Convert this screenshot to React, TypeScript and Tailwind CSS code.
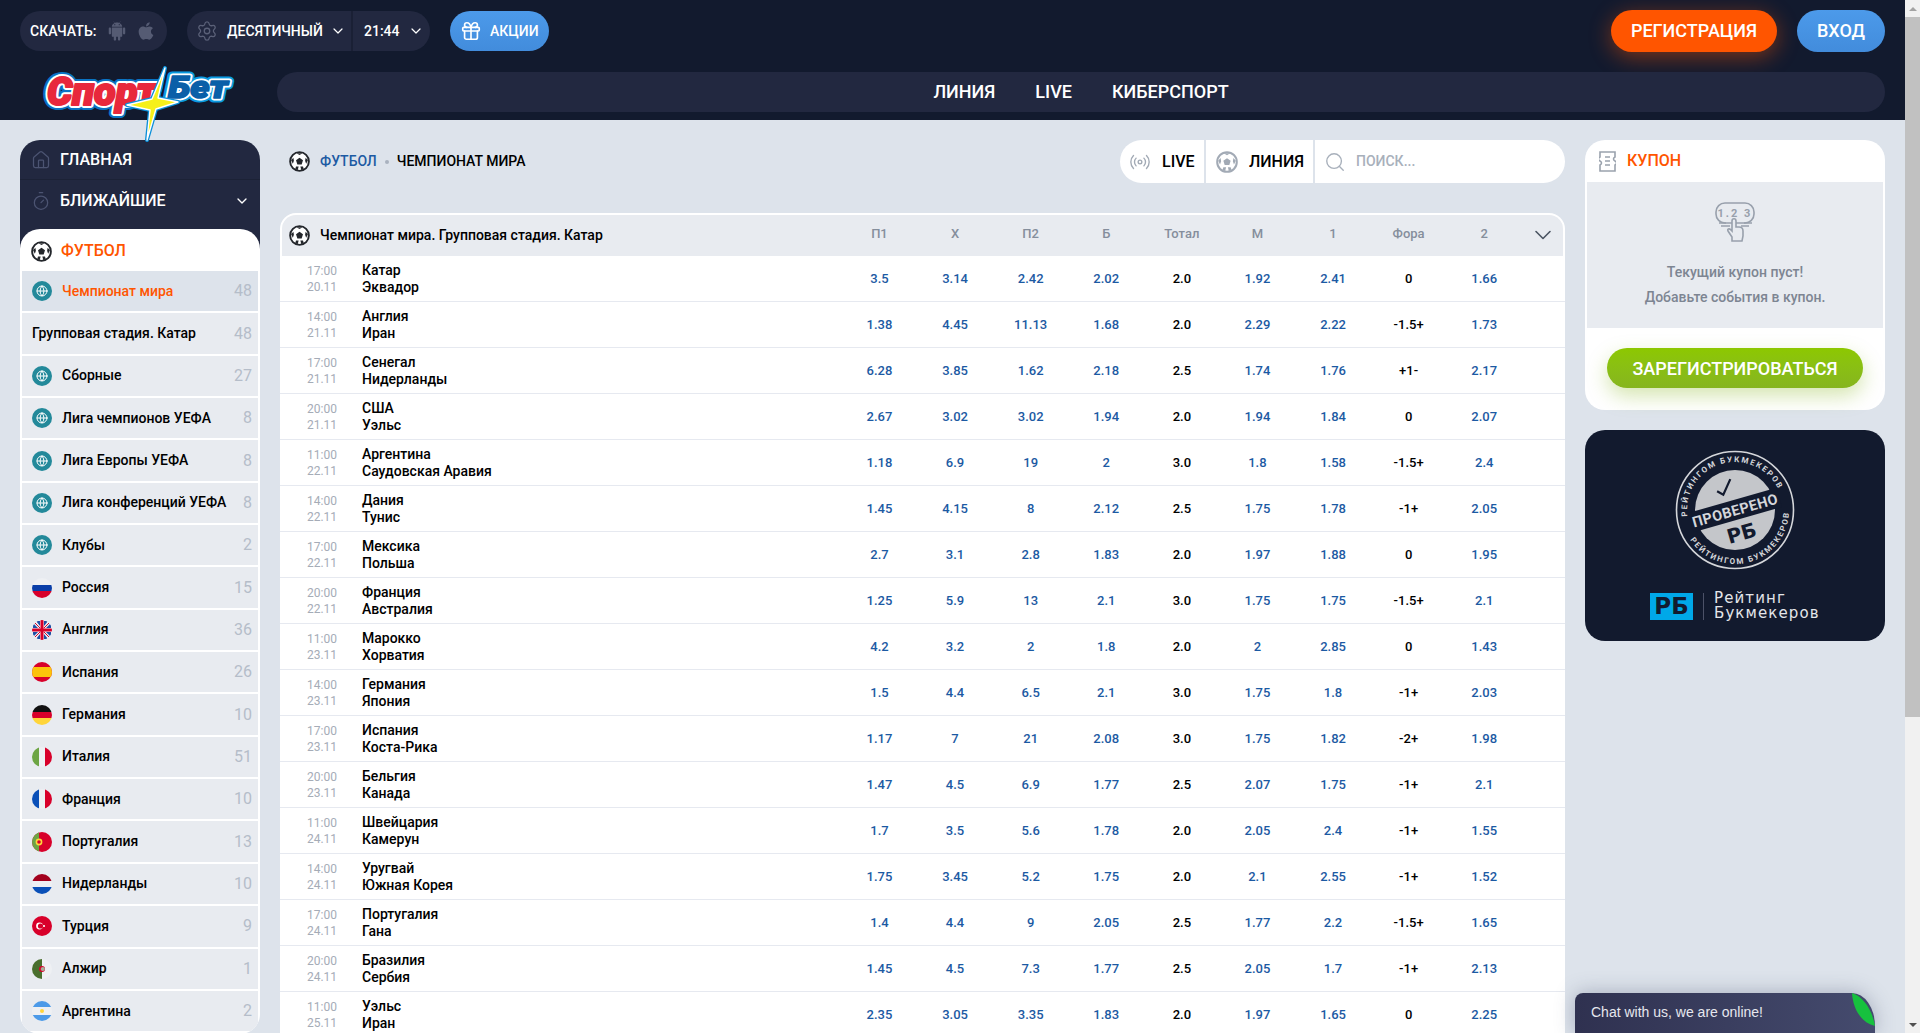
import { ChevronDown, Gift, Globe, House, Radio, Search, Settings, Timer } from "lucide-react"
import { AiFillAndroid } from "react-icons/ai"
import { FaApple } from "react-icons/fa"

const matches = [
    ["17:00", "20.11", "Катар", "Эквадор", "3.5", "3.14", "2.42", "2.02", "2.0", "1.92", "2.41", "0", "1.66"],
    ["14:00", "21.11", "Англия", "Иран", "1.38", "4.45", "11.13", "1.68", "2.0", "2.29", "2.22", "-1.5+", "1.73"],
    ["17:00", "21.11", "Сенегал", "Нидерланды", "6.28", "3.85", "1.62", "2.18", "2.5", "1.74", "1.76", "+1-", "2.17"],
    ["20:00", "21.11", "США", "Уэльс", "2.67", "3.02", "3.02", "1.94", "2.0", "1.94", "1.84", "0", "2.07"],
    ["11:00", "22.11", "Аргентина", "Саудовская Аравия", "1.18", "6.9", "19", "2", "3.0", "1.8", "1.58", "-1.5+", "2.4"],
    ["14:00", "22.11", "Дания", "Тунис", "1.45", "4.15", "8", "2.12", "2.5", "1.75", "1.78", "-1+", "2.05"],
    ["17:00", "22.11", "Мексика", "Польша", "2.7", "3.1", "2.8", "1.83", "2.0", "1.97", "1.88", "0", "1.95"],
    ["20:00", "22.11", "Франция", "Австралия", "1.25", "5.9", "13", "2.1", "3.0", "1.75", "1.75", "-1.5+", "2.1"],
    ["11:00", "23.11", "Марокко", "Хорватия", "4.2", "3.2", "2", "1.8", "2.0", "2", "2.85", "0", "1.43"],
    ["14:00", "23.11", "Германия", "Япония", "1.5", "4.4", "6.5", "2.1", "3.0", "1.75", "1.8", "-1+", "2.03"],
    ["17:00", "23.11", "Испания", "Коста-Рика", "1.17", "7", "21", "2.08", "3.0", "1.75", "1.82", "-2+", "1.98"],
    ["20:00", "23.11", "Бельгия", "Канада", "1.47", "4.5", "6.9", "1.77", "2.5", "2.07", "1.75", "-1+", "2.1"],
    ["11:00", "24.11", "Швейцария", "Камерун", "1.7", "3.5", "5.6", "1.78", "2.0", "2.05", "2.4", "-1+", "1.55"],
    ["14:00", "24.11", "Уругвай", "Южная Корея", "1.75", "3.45", "5.2", "1.75", "2.0", "2.1", "2.55", "-1+", "1.52"],
    ["17:00", "24.11", "Португалия", "Гана", "1.4", "4.4", "9", "2.05", "2.5", "1.77", "2.2", "-1.5+", "1.65"],
    ["20:00", "24.11", "Бразилия", "Сербия", "1.45", "4.5", "7.3", "1.77", "2.5", "2.05", "1.7", "-1+", "2.13"],
    ["11:00", "25.11", "Уэльс", "Иран", "2.35", "3.05", "3.35", "1.83", "2.0", "1.97", "1.65", "0", "2.25"],
]

const columns = ["П1", "Х", "П2", "Б", "Тотал", "М", "1", "Фора", "2"]

const leagues = [
    ["Сборные", "27", "world"],
    ["Лига чемпионов УЕФА", "8", "world"],
    ["Лига Европы УЕФА", "8", "world"],
    ["Лига конференций УЕФА", "8", "world"],
    ["Клубы", "2", "world"],
    ["Россия", "15", "ru"],
    ["Англия", "36", "gb"],
    ["Испания", "26", "es"],
    ["Германия", "10", "de"],
    ["Италия", "51", "it"],
    ["Франция", "10", "fr"],
    ["Португалия", "13", "pt"],
    ["Нидерланды", "10", "nl"],
    ["Турция", "9", "tr"],
    ["Алжир", "1", "dz"],
    ["Аргентина", "2", "ar"],
]

const Ball = ({ className = "", color = "#23262b" }: { className?: string; color?: string }) => (
    <svg viewBox="0 0 24 24" className={className}>
        <circle cx="12" cy="12" r="10.7" fill="#fff" stroke={color} strokeWidth="2.2" />
        <path d="M12 7.8l4 2.9-1.5 4.7h-5L8 10.7z" fill={color} />
        <path d="M8.5 2.5h7L12 4.6zM2.4 10.5l2.6-2.8.6 3.4-1.2 3.6zM21.6 10.5L19 7.7l-.6 3.4 1.2 3.6zM7 21l1-3.2h3l-1 4zM17 21l-1-3.2h-3l1 4z" fill={color} />
    </svg>
)

const Flag = ({ code }: { code: string }) => {
    if (code === "world") {
        return (
            <div className="flex h-5 w-5 shrink-0 items-center justify-center rounded-full bg-[#23899a]">
                <Globe className="h-3 w-3 text-white" strokeWidth={2} />
            </div>
        )
    }
    return (
        <div className="h-5 w-5 shrink-0 overflow-hidden rounded-full">
            <svg viewBox="0 0 20 20" className="h-5 w-5">
                {code === "ru" && (
                    <>
                        <rect width="20" height="7" fill="#eef0f3" />
                        <rect y="7" width="20" height="6" fill="#0a3ea8" />
                        <rect y="13" width="20" height="7" fill="#d8002a" />
                    </>
                )}
                {code === "gb" && (
                    <>
                        <rect width="20" height="20" fill="#eef0f3" />
                        <path d="M1 3l5 5H1zM19 3l-5 5h5zM1 17l5-5H1zM19 17l-5-5h5zM4 1l4 5V1zM16 1l-4 5V1zM4 19l4-5v5zM16 19l-4-5v5z" fill="#1f4fa5" />
                        <path d="M2 2l6 6M18 2l-6 6M2 18l6-6M18 18l-6-6" stroke="#d8002a" strokeWidth="1" />
                        <rect x="8.5" width="3" height="20" fill="#d8002a" />
                        <rect y="8.5" width="20" height="3" fill="#d8002a" />
                    </>
                )}
                {code === "es" && (
                    <>
                        <rect width="20" height="20" fill="#d8002a" />
                        <rect y="5" width="20" height="10" fill="#fcc30b" />
                    </>
                )}
                {code === "de" && (
                    <>
                        <rect width="20" height="7" fill="#111" />
                        <rect y="7" width="20" height="6" fill="#d8002a" />
                        <rect y="13" width="20" height="7" fill="#ffd53a" />
                    </>
                )}
                {code === "it" && (
                    <>
                        <rect width="7" height="20" fill="#6da544" />
                        <rect x="7" width="6" height="20" fill="#eef0f3" />
                        <rect x="13" width="7" height="20" fill="#d8002a" />
                    </>
                )}
                {code === "fr" && (
                    <>
                        <rect width="7" height="20" fill="#0a50b8" />
                        <rect x="7" width="6" height="20" fill="#eef0f3" />
                        <rect x="13" width="7" height="20" fill="#d8002a" />
                    </>
                )}
                {code === "pt" && (
                    <>
                        <rect width="20" height="20" fill="#d8002a" />
                        <path d="M0 0h7v20H0z" fill="#6da544" />
                        <circle cx="7" cy="10" r="3.4" fill="#ffd53a" />
                        <circle cx="7" cy="10" r="1.8" fill="#d8002a" />
                    </>
                )}
                {code === "nl" && (
                    <>
                        <rect width="20" height="7" fill="#a2001d" />
                        <rect y="7" width="20" height="6" fill="#eef0f3" />
                        <rect y="13" width="20" height="7" fill="#0a50b8" />
                    </>
                )}
                {code === "tr" && (
                    <>
                        <rect width="20" height="20" fill="#d8002a" />
                        <circle cx="7.5" cy="10" r="3.4" fill="#fff" />
                        <circle cx="8.5" cy="10" r="2.6" fill="#d8002a" />
                        <circle cx="12" cy="10" r="1.1" fill="#fff" />
                    </>
                )}
                {code === "dz" && (
                    <>
                        <rect width="10" height="20" fill="#496e2d" />
                        <rect x="10" width="10" height="20" fill="#eef0f3" />
                        <circle cx="10" cy="10" r="3" fill="#d8002a" />
                        <circle cx="10.8" cy="10" r="2.1" fill="#a8b09a" />
                    </>
                )}
                {code === "ar" && (
                    <>
                        <rect width="20" height="20" fill="#eef0f3" />
                        <rect width="20" height="6" fill="#4c9ae8" />
                        <rect y="14" width="20" height="6" fill="#4c9ae8" />
                        <circle cx="10" cy="10" r="2" fill="#ffd53a" />
                    </>
                )}
            </svg>
        </div>
    )
}

// the wordmark stays real text: three passes give the blue edge, the white edge and the fat fill
const Logo = () => (
    <svg viewBox="0 0 200 76" className="absolute left-[20px] top-[-6px] h-[76px] w-[200px]">
        <g className="[font-family:Roboto,sans-serif]" fontWeight="900" fontStyle="italic" strokeLinejoin="round">
            <text x="7" y="39" fontSize="38" textLength="110" lengthAdjust="spacingAndGlyphs" fill="#0a74c4" stroke="#0a74c4" strokeWidth="10">Спорт</text>
            <text x="7" y="39" fontSize="38" textLength="110" lengthAdjust="spacingAndGlyphs" fill="#fff" stroke="#fff" strokeWidth="6">Спорт</text>
            <text x="7" y="39" fontSize="38" textLength="110" lengthAdjust="spacingAndGlyphs" fill="#e8283c" stroke="#e8283c" strokeWidth="2">Спорт</text>
            <text x="128" y="32" fontSize="32" textLength="60" lengthAdjust="spacingAndGlyphs" fill="#0a9ae0" stroke="#0a9ae0" strokeWidth="9">Бет</text>
            <text x="128" y="32" fontSize="32" textLength="60" lengthAdjust="spacingAndGlyphs" fill="#fff" stroke="#fff" strokeWidth="5">Бет</text>
            <text x="128" y="32" fontSize="32" textLength="60" lengthAdjust="spacingAndGlyphs" fill="#0a5fa8" stroke="#0a5fa8" strokeWidth="1.6">Бет</text>
        </g>
        <path d="M125 2L118 32L138 36L116 43L107 74L110 44L87 39L112 33z" fill="none" stroke="#0a8fd8" strokeWidth="4" strokeLinejoin="round" />
        <path d="M125 2L118 32L138 36L116 43L107 74L110 44L87 39L112 33z" fill="#f6f01a" stroke="#fff" strokeWidth="1.4" strokeLinejoin="round" />
    </svg>
)

const Stamp = () => (
    <svg viewBox="0 0 120 120" className="h-[120px] w-[120px]">
        <defs>
            <path id="ringTop" d="M12 60a48 48 0 0 1 96 0" />
            <path id="ringBottom" d="M6 60a54 54 0 0 0 108 0" />
        </defs>
        <circle cx="60" cy="60" r="58.5" fill="none" stroke="#d4d6da" strokeWidth="1.6" />
        <circle cx="60" cy="60" r="40" fill="#c4c6ca" />
        <g transform="rotate(-16 60 60)">
            <g fill="#d4d6da" fontSize="8" fontWeight="700" letterSpacing="1.7" textAnchor="middle" className="[font-family:Roboto,sans-serif]">
                <text>
                    <textPath href="#ringTop" startOffset="50%">РЕЙТИНГОМ БУКМЕКЕРОВ</textPath>
                </text>
                <text>
                    <textPath href="#ringBottom" startOffset="50%">РЕЙТИНГОМ БУКМЕКЕРОВ</textPath>
                </text>
            </g>
            <path d="M48 37l5 5 11-13" fill="none" stroke="#121a2e" strokeWidth="2.2" />
            <text x="60" y="91" textAnchor="middle" fontSize="20" fontWeight="700" fill="#121a2e" className="[font-family:'DejaVu_Sans',sans-serif]">РБ</text>
            <rect x="14" y="50" width="92" height="20" fill="#121a2e" />
            <text x="60" y="65.5" textAnchor="middle" fontSize="14.5" fontWeight="700" letterSpacing="0.4" fill="#d4d6da" className="[font-family:Roboto,sans-serif]">ПРОВЕРЕНО</text>
        </g>
    </svg>
)

const CouponIcon = () => (
    <svg viewBox="0 0 17 21" className="h-[21px] w-[17px]" fill="none" stroke="#9aa2ad" strokeWidth="1.6">
        <path d="M1 1h15v5c-2 1-2 3 0 4s2 3 0 4v6H1v-6c2-1 2-3 0-4s-2-3 0-4z" />
        <path d="M6 6h5M6 10h5M6 14h5" />
    </svg>
)

const TouchIcon = () => (
    <svg viewBox="0 0 40 40" className="h-10 w-10" fill="none" stroke="#98a0ac" strokeWidth="1.6">
        <rect x="1" y="1" width="38" height="20" rx="9" />
        <path d="M6 24h9M26 24h8M4 21h7M29 21h8" />
        <text x="20" y="15" textAnchor="middle" fontSize="11" fontWeight="700" letterSpacing="2" fill="#98a0ac" stroke="none" className="[font-family:Roboto,sans-serif]">1.2 3</text>
        <path d="M17 39v-4l-4-6c-1-2 1-3 3-1l1 1v-10c0-3 4-3 4 0v6h3c3 0 4 1 4 4v5l-1 5z" fill="#e8ebf0" />
    </svg>
)

const MatchRow = ({ row }: { row: string[] }) => (
    <div className="flex h-[46px] shrink-0 items-center border-b border-[#e6e9f0]">
        <div className="flex w-[82px] shrink-0 flex-col items-center pl-[2px] text-[12px] leading-[16px] text-[#a5acb7]">
            <span>{row[0]}</span>
            <span>{row[1]}</span>
        </div>
        <div className="flex flex-1 flex-col text-[14px] font-medium leading-[17px] text-black">
            <span>{row[2]}</span>
            <span>{row[3]}</span>
        </div>
        {row.slice(4).map((value, i) => (
            <div
                key={i}
                className={
                    i === 4 || i === 7
                        ? "w-[75.6px] shrink-0 text-center text-[13px] font-medium text-black"
                        : "w-[75.6px] shrink-0 text-center text-[13px] font-medium text-[#1c5aa3]"
                }
            >
                {value}
            </div>
        ))}
        <div className="w-[43px] shrink-0" />
    </div>
)

const Header = () => (
    <header className="flex h-[120px] shrink-0 flex-col bg-[#121a2e] px-5 pt-[10px]">
        <div className="flex h-[42px] items-center justify-between">
            <div className="flex items-center text-[14px] font-medium text-white">
                <div className="flex h-10 w-[147px] items-center rounded-full bg-[#222840] pl-[10px]">
                    <span>СКАЧАТЬ:</span>
                    <AiFillAndroid className="ml-[10px] h-[22px] w-[22px] text-[#555b73]" />
                    <FaApple className="ml-2 h-[20px] w-[20px] text-[#555b73]" />
                </div>
                <div className="ml-5 flex h-10 w-[243px] items-center rounded-full bg-[#222840]">
                    <div className="flex h-10 w-[166px] items-center border-r-2 border-[#1a2035] pl-[9px]">
                        <Settings className="h-[22px] w-[22px] text-[#5b6178]" strokeWidth={1.4} />
                        <span className="ml-[9px]">ДЕСЯТИЧНЫЙ</span>
                        <ChevronDown className="ml-[7px] h-4 w-4 text-white" strokeWidth={1.8} />
                    </div>
                    <span className="ml-[11px]">21:44</span>
                    <ChevronDown className="ml-2 h-4 w-4 text-white" strokeWidth={1.8} />
                </div>
                <div className="ml-5 flex h-10 w-[99px] items-center rounded-full bg-gradient-to-b from-[#4c9aea] to-[#428cdc] pl-[10px]">
                    <Gift className="h-[22px] w-[22px]" strokeWidth={1.8} />
                    <span className="ml-[8px]">АКЦИИ</span>
                </div>
            </div>
            <div className="flex items-center text-[18px] font-medium text-white">
                <div className="flex h-[42px] w-[166px] items-center justify-center rounded-full bg-[#ff5500] pb-[1px] shadow-[0_5px_22px_rgba(255,85,0,0.45)]">
                    РЕГИСТРАЦИЯ
                </div>
                <div className="ml-5 flex h-[42px] w-[88px] items-center justify-center rounded-full bg-gradient-to-b from-[#4c9aea] to-[#428cdc] pb-[1px]">
                    ВХОД
                </div>
            </div>
        </div>
        <div className="relative mt-5 flex items-center">
            <Logo />
            <nav className="ml-[257px] flex h-10 flex-1 items-center justify-center gap-10 rounded-full bg-[#222840] pb-[1px] text-[18px] font-medium text-white">
                <span>ЛИНИЯ</span>
                <span>LIVE</span>
                <span>КИБЕРСПОРТ</span>
            </nav>
        </div>
    </header>
)

const Sidebar = () => (
    <aside className="w-[240px] shrink-0">
        <div className="rounded-t-[20px] bg-[#222840] pb-[27px] text-[16px] font-medium text-white">
            <div className="flex h-[40px] items-center border-b border-[#1c2236] pl-[11px]">
                <House className="h-5 w-5 text-[#4c5472]" strokeWidth={1.5} />
                <span className="ml-[9px]">ГЛАВНАЯ</span>
            </div>
            <div className="flex h-[42px] items-center pl-[11px] pr-[10px]">
                <Timer className="h-5 w-5 text-[#4c5472]" strokeWidth={1.5} />
                <span className="ml-[9px] flex-1">БЛИЖАЙШИЕ</span>
                <ChevronDown className="h-4 w-4" strokeWidth={2} />
            </div>
        </div>
        <div className="relative -mt-5 overflow-hidden rounded-[20px] bg-white px-[2px] pb-[3px]">
            <div className="flex h-[42px] items-center pl-[9px] pt-[2px]">
                <Ball className="h-[21px] w-[21px]" />
                <span className="ml-[9px] text-[16px] font-medium text-[#ff5500]">ФУТБОЛ</span>
            </div>
            <div className="flex flex-col gap-[2px] text-[14px] font-medium text-black">
                <div className="flex h-[40.35px] items-center bg-[#dde3eb] pl-[10px] pr-[6px]">
                    <Flag code="world" />
                    <span className="ml-[10px] flex-1 text-[#ff5500]">Чемпионат мира</span>
                    <span className="text-[16px] font-normal text-[#b5bdc9]">48</span>
                </div>
                <div className="flex h-[40.35px] items-center bg-[#e8ebf0] pl-[10px] pr-[6px]">
                    <span className="flex-1">Групповая стадия. Катар</span>
                    <span className="text-[16px] font-normal text-[#b5bdc9]">48</span>
                </div>
                {leagues.map(([name, count, code]) => (
                    <div key={name} className="flex h-[40.35px] items-center bg-[#e8ebf0] pl-[10px] pr-[6px]">
                        <Flag code={code} />
                        <span className="ml-[10px] flex-1">{name}</span>
                        <span className="text-[16px] font-normal text-[#b5bdc9]">{count}</span>
                    </div>
                ))}
            </div>
        </div>
    </aside>
)

const Main = () => (
    <main className="w-[1285px] shrink-0">
        <div className="flex h-[43px] items-center justify-between">
            <div className="flex items-center pl-[9px] text-[14px] font-medium">
                <Ball className="h-[21px] w-[21px]" />
                <span className="ml-[10px] text-[#1c5aa3]">ФУТБОЛ</span>
                <span className="mx-2 h-1 w-1 rounded-full bg-[#a9b2bf]" />
                <span className="text-black">ЧЕМПИОНАТ МИРА</span>
            </div>
            <div className="flex h-[43px] w-[445px] items-center rounded-full bg-white text-[16px] font-medium text-black">
                <div className="flex h-full w-[86px] items-center border-r-2 border-[#dde3eb] pl-[9px]">
                    <Radio className="h-[22px] w-[22px] text-[#a2aab5]" strokeWidth={1.5} />
                    <span className="ml-[11px]">LIVE</span>
                </div>
                <div className="flex h-full w-[109px] items-center border-r-2 border-[#dde3eb] pl-[10px]">
                    <Ball className="h-[22px] w-[22px]" color="#a2aab5" />
                    <span className="ml-[11px]">ЛИНИЯ</span>
                </div>
                <div className="flex items-center pl-[9px] text-[14px] text-[#a8b0bb]">
                    <Search className="h-[22px] w-[22px]" strokeWidth={1.5} />
                    <span className="ml-[10px]">ПОИСК...</span>
                </div>
            </div>
        </div>
        <div className="mt-[30px] rounded-t-[16px] bg-white">
            <div className="mx-[2px] flex h-[41px] translate-y-[2px] items-center rounded-t-[14px] bg-[#e8ebf0] pl-[7px]">
                <Ball className="h-[21px] w-[21px]" />
                <span className="ml-[10px] flex-1 text-[14px] font-medium text-black">Чемпионат мира. Групповая стадия. Катар</span>
                {columns.map((c) => (
                    <span key={c} className="w-[75.6px] shrink-0 pb-[3px] text-center text-[13px] font-medium text-[#858e9c]">
                        {c}
                    </span>
                ))}
                <div className="flex w-[41px] shrink-0 justify-center pb-[2px]">
                    <ChevronDown className="h-7 w-7 text-[#4b5563]" strokeWidth={1.4} />
                </div>
            </div>
            <div className="pt-[2px]">
                {matches.map((row, i) => (
                    <MatchRow key={i} row={row} />
                ))}
            </div>
        </div>
    </main>
)

const RightColumn = () => (
    <aside className="flex w-[300px] shrink-0 flex-col gap-5">
        <div className="rounded-[20px] bg-white px-[2px] pb-[22px]">
            <div className="flex h-[42px] items-center pl-3">
                <CouponIcon />
                <span className="ml-[11px] text-[16px] font-medium text-[#ff5500]">КУПОН</span>
            </div>
            <div className="flex h-[146px] flex-col items-center bg-[#e8ebf0] pt-5 text-[14px] font-medium leading-[25px] text-[#7d8592]">
                <TouchIcon />
                <span className="mt-[18px]">Текущий купон пуст!</span>
                <span>Добавьте события в купон.</span>
            </div>
            <div className="mx-5 mt-5 flex h-10 items-center justify-center rounded-full bg-gradient-to-b from-[#8dc800] to-[#86b51e] text-[18px] font-medium text-white shadow-[0_8px_20px_rgba(134,181,30,0.35)]">
                ЗАРЕГИСТРИРОВАТЬСЯ
            </div>
        </div>
        <div className="flex h-[211px] flex-col items-center rounded-[20px] bg-[#121a2e] pt-5">
            <Stamp />
            <div className="mt-[21px] flex w-[170px] items-center">
                <div className="flex h-[27px] w-[43px] shrink-0 items-center justify-center bg-[#00a8e8] text-[23px] font-bold leading-none text-[#121a2e] [font-family:'DejaVu_Sans',sans-serif]">
                    РБ
                </div>
                <div className="ml-[10px] h-[27px] w-px shrink-0 bg-[#4c5268]" />
                <div className="ml-[10px] flex flex-col whitespace-nowrap text-[15px] leading-[15px] tracking-[1.1px] text-[#e4e6ea] [font-family:'DejaVu_Sans',sans-serif]">
                    <span>Рейтинг</span>
                    <span>Букмекеров</span>
                </div>
            </div>
        </div>
    </aside>
)

export default function App() {
    return (
        <div className="relative flex h-[1033px] w-full overflow-hidden bg-[#dde3eb] [font-family:Roboto,sans-serif]">
            <div className="flex min-w-0 flex-1 flex-col">
                <Header />
                <div className="flex gap-5 px-5 pt-5">
                    <Sidebar />
                    <Main />
                    <RightColumn />
                </div>
            </div>
            <div className="flex w-[15px] shrink-0 flex-col items-center bg-[#f1f1f1]">
                <div className="flex h-[17px] items-center">
                    <div className="h-0 w-0 border-x-4 border-b-4 border-x-transparent border-b-[#a3a3a3]" />
                </div>
                <div className="h-[700px] w-full bg-[#c1c1c1]" />
                <div className="flex-1" />
                <div className="flex h-[17px] items-center">
                    <div className="h-0 w-0 border-x-4 border-t-4 border-x-transparent border-t-[#505050]" />
                </div>
            </div>
            <div className="absolute bottom-0 right-[45px] h-10 w-[300px] rounded-tl-[8px] rounded-tr-[23px_33px] bg-gradient-to-r from-[#2f3150] to-[#454b6e] pl-4 pt-[9px] text-[14px] text-[#e6e7ee] shadow-[0_0_20px_rgba(60,70,100,0.35)] [font-family:'Liberation_Sans',sans-serif]">
                Chat with us, we are online!
                <svg viewBox="0 0 23 33" className="absolute right-0 top-0 h-[33px] w-[23px]">
                    <path d="M0 0C12 4 20 17 23 33C10 30 1 17 0 0z" fill="#17c13e" />
                </svg>
            </div>
        </div>
    )
}
